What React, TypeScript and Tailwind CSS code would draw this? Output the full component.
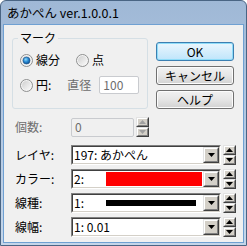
import React from "react";

const Tri = ({ up, w = 7, h = 4, color = "#000" }: { up?: boolean; w?: number; h?: number; color?: string }) => (
  <svg width={w} height={h} viewBox={`0 0 ${w} ${h}`}>
    {up ? (
      <polygon points={`${w / 2},0 ${w},${h} 0,${h}`} fill={color} />
    ) : (
      <polygon points={`0,0 ${w},0 ${w / 2},${h}`} fill={color} />
    )}
  </svg>
);

const Raised = ({ children, className = "" }: { children?: React.ReactNode; className?: string }) => (
  <div className={"border border-t-[#e3e3e3] border-l-[#e3e3e3] border-r-[#404040] border-b-[#404040] bg-[#d4d0c8] " + className}>
    <div className="w-full h-full border border-t-white border-l-white border-r-[#808080] border-b-[#808080] flex items-center justify-center">
      {children}
    </div>
  </div>
);

const Spin = ({ disabled }: { disabled?: boolean }) => (
  <div className="flex flex-col w-[13px] h-[20px] ml-[2px] shrink-0">
    <Raised className="h-[10px] w-[13px]">
      <Tri up w={7} h={4} color={disabled ? "#a0a0a0" : "#000"} />
    </Raised>
    <Raised className="h-[10px] w-[13px]">
      <Tri w={7} h={4} color={disabled ? "#a0a0a0" : "#000"} />
    </Raised>
  </div>
);

const Combo = ({ children }: { children?: React.ReactNode }) => (
  <div className="w-[150px] h-[20px] border border-t-[#808080] border-l-[#808080] border-r-white border-b-white">
    <div className="w-full h-full border border-t-[#404040] border-l-[#404040] border-r-[#d4d0c8] border-b-[#d4d0c8] bg-white flex items-center">
      <div className="flex-1 h-full flex items-center pl-[1px] leading-[14px] overflow-hidden">{children}</div>
      <Raised className="w-[16px] h-full shrink-0">
        <Tri w={7} h={4} />
      </Raised>
    </div>
  </div>
);

const Radio = ({ checked }: { checked?: boolean }) => (
  <svg width="13" height="13" viewBox="0 0 13 13">
    <defs>
      <linearGradient id="rg" x1="0" y1="0" x2="1" y2="1">
        <stop offset="0" stopColor="#cfcfcf" />
        <stop offset="1" stopColor="#fafafa" />
      </linearGradient>
      <radialGradient id="dot" cx="0.4" cy="0.35" r="0.7">
        <stop offset="0" stopColor="#8fdcfb" />
        <stop offset="0.5" stopColor="#2a8ad4" />
        <stop offset="1" stopColor="#0d4d8c" />
      </radialGradient>
    </defs>
    <circle cx="6.5" cy="6.5" r="6" fill="#f4f4f4" stroke="#8e8f8f" strokeWidth="1" />
    <circle cx="6.5" cy="6.5" r="4.5" fill="url(#rg)" />
    {checked && <circle cx="6.5" cy="6.5" r="3.5" fill="url(#dot)" stroke="#1a4f86" strokeWidth="0.6" />}
  </svg>
);

const Btn = ({ children, def }: { children: React.ReactNode; def?: boolean }) => (
  <div
    className={
      "w-[78px] h-[19px] rounded-[3px] border flex items-center justify-center leading-[14px] " +
      (def
        ? "border-[#3c7fb1] bg-gradient-to-b from-[#eaf6fd] to-[#bfe5fb] shadow-[inset_0_0_0_1px_#8fdcf8]"
        : "border-[#707070] bg-gradient-to-b from-[#f2f2f2] via-[#e6e6e6] to-[#d2d2d2] shadow-[inset_0_0_0_1px_#fcfcfc]")
    }
  >
    {children}
  </div>
);

export default function App() {
  return (
    <div className="w-[247px] h-[246px] font-['Noto_Sans_CJK_JP',sans-serif] text-[12px] text-black">
      <div className="w-full h-full flex flex-col border border-[#4a6584] rounded-t-[6px] bg-gradient-to-b from-[#9fb8d6] via-[#b3c8e2] to-[#c4d6ea]">
        <div className="h-[23px] shrink-0 flex items-center pl-[6px] text-[12.5px] leading-[14px] text-[#000]">
          あかぺん ver.1.0.0.1
        </div>
        <div className="flex-1 mx-[2px] mb-[2px] bg-[#f0f0f0] border border-[#6fa0d2] flex flex-col pl-[8px]">
          <div className="flex mt-[6px]">
            <fieldset className="w-[136px] h-[78px] border border-[#d5dfe5] rounded-[3px] pl-[7px]">
              <legend className="ml-[-2px] px-[2px] leading-[14px]">マーク</legend>
              <div className="flex items-center h-[16px] mt-[7px]">
                <Radio checked />
                <span className="ml-[3px] leading-[14px]">線分</span>
                <span className="ml-[16px]">
                  <Radio />
                </span>
                <span className="ml-[3px] leading-[14px]">点</span>
              </div>
              <div className="flex items-center h-[18px] mt-[8px]">
                <Radio />
                <span className="ml-[3px] leading-[14px]">円:</span>
                <span className="ml-[16px] leading-[14px] text-[#6d6d6d]">直径</span>
                <div className="ml-[8px] w-[40px] h-[18px] rounded-[2px] border border-[#c9cbcf] bg-white flex items-center pl-[3px] leading-[14px] text-[#6d6d6d]">
                  100
                </div>
              </div>
            </fieldset>
            <div className="flex flex-col gap-[5px] ml-[8px] mt-[11px]">
              <Btn def>OK</Btn>
              <Btn>キャンセル</Btn>
              <Btn>ヘルプ</Btn>
            </div>
          </div>

          <div className="flex items-center mt-[8px] pl-[3px]">
            <span className="w-[56px] leading-[14px] text-[#6d6d6d]">個数:</span>
            <div className="w-[63px] h-[19px] rounded-[2px] border border-[#c9cbcf] bg-[#f0f0f0] flex items-center pl-[3px] leading-[14px] text-[#6d6d6d]">
              0
            </div>
            <Spin disabled />
          </div>

          <div className="flex flex-col gap-[4px] mt-[8px] pl-[3px]">
            <div className="flex items-center">
              <span className="w-[56px] leading-[14px]">レイヤ:</span>
              <Combo>197: あかぺん</Combo>
              <Spin />
            </div>
            <div className="flex items-center">
              <span className="w-[56px] leading-[14px]">カラー:</span>
              <Combo>
                <span className="w-[32px] shrink-0">2:</span>
                <span className="flex-1 h-[14px] bg-[#ff0000] mr-[1px]" />
              </Combo>
              <Spin />
            </div>
            <div className="flex items-center">
              <span className="w-[56px] leading-[14px]">線種:</span>
              <Combo>
                <span className="w-[32px] shrink-0">1:</span>
                <span className="w-[90px] h-[6px] bg-black" />
              </Combo>
              <Spin />
            </div>
            <div className="flex items-center">
              <span className="w-[56px] leading-[14px]">線幅:</span>
              <Combo>1: 0.01</Combo>
              <Spin />
            </div>
          </div>
        </div>
      </div>
    </div>
  );
}
